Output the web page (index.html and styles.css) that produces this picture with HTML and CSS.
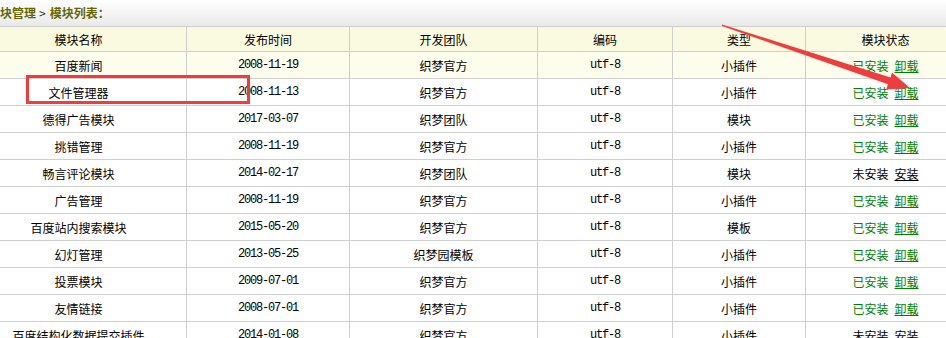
FILE: index.html
```html
<!DOCTYPE html>
<html lang="zh-CN">
<head>
<meta charset="utf-8">
<title>模块列表</title>
<link rel="stylesheet" href="styles.css">
</head>
<body>
<div class="page">
  <div class="crumb">模块管理<span class="sep">&gt;</span>模块列表：</div>
  <table class="list">
    <colgroup>
      <col class="c1"><col class="c2"><col class="c3"><col class="c4"><col class="c5"><col class="c6">
    </colgroup>
    <thead>
      <tr><th>模块名称</th><th>发布时间</th><th>开发团队</th><th>编码</th><th>类型</th><th>模块状态</th></tr>
    </thead>
    <tbody>
      <tr class="hover"><td>百度新闻</td><td class="mono">2008-11-19</td><td>织梦官方</td><td class="mono">utf-8</td><td>小插件</td><td><span class="ok">已安装</span><a class="act ok" href="#">卸载</a></td></tr>
      <tr><td>文件管理器</td><td class="mono">2008-11-13</td><td>织梦官方</td><td class="mono">utf-8</td><td>小插件</td><td><span class="ok">已安装</span><a class="act ok" href="#">卸载</a></td></tr>
      <tr><td>德得广告模块</td><td class="mono">2017-03-07</td><td>织梦团队</td><td class="mono">utf-8</td><td>模块</td><td><span class="ok">已安装</span><a class="act ok" href="#">卸载</a></td></tr>
      <tr><td>挑错管理</td><td class="mono">2008-11-19</td><td>织梦官方</td><td class="mono">utf-8</td><td>小插件</td><td><span class="ok">已安装</span><a class="act ok" href="#">卸载</a></td></tr>
      <tr><td>畅言评论模块</td><td class="mono">2014-02-17</td><td>织梦团队</td><td class="mono">utf-8</td><td>模块</td><td><span>未安装</span><a class="act" href="#">安装</a></td></tr>
      <tr><td>广告管理</td><td class="mono">2008-11-19</td><td>织梦官方</td><td class="mono">utf-8</td><td>小插件</td><td><span class="ok">已安装</span><a class="act ok" href="#">卸载</a></td></tr>
      <tr><td>百度站内搜索模块</td><td class="mono">2015-05-20</td><td>织梦官方</td><td class="mono">utf-8</td><td>模板</td><td><span class="ok">已安装</span><a class="act ok" href="#">卸载</a></td></tr>
      <tr><td>幻灯管理</td><td class="mono">2013-05-25</td><td>织梦园模板</td><td class="mono">utf-8</td><td>小插件</td><td><span class="ok">已安装</span><a class="act ok" href="#">卸载</a></td></tr>
      <tr><td>投票模块</td><td class="mono">2009-07-01</td><td>织梦官方</td><td class="mono">utf-8</td><td>小插件</td><td><span class="ok">已安装</span><a class="act ok" href="#">卸载</a></td></tr>
      <tr><td>友情链接</td><td class="mono">2008-07-01</td><td>织梦官方</td><td class="mono">utf-8</td><td>小插件</td><td><span class="ok">已安装</span><a class="act ok" href="#">卸载</a></td></tr>
      <tr><td>百度结构化数据提交插件</td><td class="mono">2014-01-08</td><td>织梦官方</td><td class="mono">utf-8</td><td>小插件</td><td><span>未安装</span><a class="act" href="#">安装</a></td></tr>
    </tbody>
  </table>
</div>
<svg class="marks" width="946" height="338" viewBox="0 0 946 338">
  <rect x="27.5" y="76.5" width="221" height="26" fill="none" stroke="#f23c3c" stroke-width="3"/>
  <polygon fill="#ef3d3d" points="722,24.5 890.6,77.4 892,72.5 910,88 886.2,89.5 888,84.3 722,26"/>
</svg>
</body>
</html>
```
FILE: styles.css
```css
html, body {
  margin: 0;
  padding: 0;
  background: #fff;
}
body {
  position: relative;
  width: 946px;
  height: 338px;
  overflow: hidden;
  font: 12px "Noto Sans CJK SC", "Noto Sans", sans-serif;
  color: #000;
}
.page {
  margin-left: -30px;
  width: 995px;
}
.crumb {
  height: 26px;
  line-height: 25px;
  padding-left: 18px;
  background: linear-gradient(#ffffff, #e9e9e9);
  font-weight: bold;
  color: #666600;
  white-space: nowrap;
}
.sep {
  margin: 0 4px 0 3px;
  font-weight: normal;
  color: #333;
}
.list {
  width: 995px;
  border-collapse: collapse;
  table-layout: fixed;
}
.c1 { width: 216px; }
.c2 { width: 163px; }
.c3 { width: 188px; }
.c4 { width: 135px; }
.c5 { width: 133px; }
.c6 { width: 160px; }
.list th,
.list td {
  border: 1px solid #cfcfcf;
  padding: 0;
  text-align: center;
  white-space: nowrap;
  overflow: hidden;
}
.list th {
  height: 24px;
  font-weight: normal;
  background: #fafae0;
}
.list td {
  height: 26px;
}
.list tr.hover td {
  background: #fcfdec;
}
.mono {
  font-family: "Liberation Mono", monospace;
  font-size: 12px;
  letter-spacing: -1.2px;
}
.ok {
  color: #008000;
}
.act {
  margin-left: 6px;
  color: #000;
  text-decoration: underline;
}
.act.ok {
  color: #008000;
}
.marks {
  position: absolute;
  left: 0;
  top: 0;
  pointer-events: none;
}
```
